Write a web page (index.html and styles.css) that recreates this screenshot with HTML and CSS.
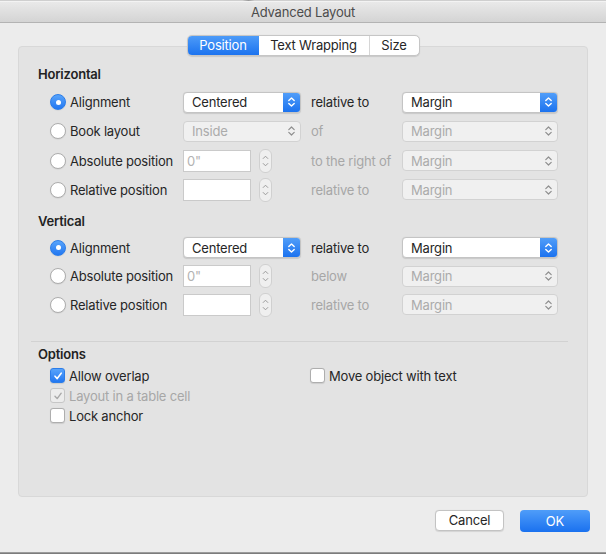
FILE: index.html
```html
<!DOCTYPE html>
<html>
<head>
<meta charset="utf-8">
<link rel="stylesheet" href="styles.css">
</head>
<body>
<div class="screen">
  <div class="behind"></div>
  <div class="window">
    <div class="titlebar">Advanced Layout</div>
    <div class="content">
      <div class="tabs">
        <div class="tab tab-active tab-pos">Position</div>
        <div class="tab tab-wrap">Text Wrapping</div>
        <div class="tab tab-size">Size</div>
      </div>
      <div class="panel">
        <div class="heading">Horizontal</div>
        <div class="rows rows-h">
          <div class="row">
            <div class="c1"><span class="radio radio-on"></span><span class="lbl">Alignment</span></div>
            <div class="c2"><div class="popup"><span class="pv">Centered</span><span class="pbtn"><svg width="9" height="12" viewBox="0 0 9 12"><path d="M1.8 4.6 L4.5 2 L7.2 4.6 M1.8 7.4 L4.5 10 L7.2 7.4" fill="none" stroke="#fff" stroke-width="1.4" stroke-linecap="round" stroke-linejoin="round"/></svg></span></div></div>
            <div class="c3 lbl">relative to</div>
            <div class="c4"><div class="popup popup-wide"><span class="pv">Margin</span><span class="pbtn"><svg width="9" height="12" viewBox="0 0 9 12"><path d="M1.8 4.6 L4.5 2 L7.2 4.6 M1.8 7.4 L4.5 10 L7.2 7.4" fill="none" stroke="#fff" stroke-width="1.4" stroke-linecap="round" stroke-linejoin="round"/></svg></span></div></div>
          </div>
          <div class="row">
            <div class="c1"><span class="radio"></span><span class="lbl">Book layout</span></div>
            <div class="c2"><div class="popup popup-off"><span class="pv">Inside</span><span class="pbtn"><svg width="9" height="12" viewBox="0 0 9 12"><path d="M1.8 4.6 L4.5 2 L7.2 4.6 M1.8 7.4 L4.5 10 L7.2 7.4" fill="none" stroke="#8e8e8e" stroke-width="1.2" stroke-linecap="round" stroke-linejoin="round"/></svg></span></div></div>
            <div class="c3 lbl lbl-off">of</div>
            <div class="c4"><div class="popup popup-wide popup-off"><span class="pv">Margin</span><span class="pbtn"><svg width="9" height="12" viewBox="0 0 9 12"><path d="M1.8 4.6 L4.5 2 L7.2 4.6 M1.8 7.4 L4.5 10 L7.2 7.4" fill="none" stroke="#8e8e8e" stroke-width="1.2" stroke-linecap="round" stroke-linejoin="round"/></svg></span></div></div>
          </div>
          <div class="row">
            <div class="c1"><span class="radio"></span><span class="lbl">Absolute position</span></div>
            <div class="c2"><div class="field"><span class="ph">0"</span></div><div class="stepper"><svg width="7" height="18" viewBox="0 0 7 18"><path d="M1.2 6.5 L3.5 4.2 L5.8 6.5 M1.2 11.5 L3.5 13.8 L5.8 11.5" fill="none" stroke="#9a9a9a" stroke-width="1" stroke-linecap="round" stroke-linejoin="round"/></svg></div></div>
            <div class="c3 lbl lbl-off">to the right of</div>
            <div class="c4"><div class="popup popup-wide popup-off"><span class="pv">Margin</span><span class="pbtn"><svg width="9" height="12" viewBox="0 0 9 12"><path d="M1.8 4.6 L4.5 2 L7.2 4.6 M1.8 7.4 L4.5 10 L7.2 7.4" fill="none" stroke="#8e8e8e" stroke-width="1.2" stroke-linecap="round" stroke-linejoin="round"/></svg></span></div></div>
          </div>
          <div class="row">
            <div class="c1"><span class="radio"></span><span class="lbl">Relative position</span></div>
            <div class="c2"><div class="field"></div><div class="stepper"><svg width="7" height="18" viewBox="0 0 7 18"><path d="M1.2 6.5 L3.5 4.2 L5.8 6.5 M1.2 11.5 L3.5 13.8 L5.8 11.5" fill="none" stroke="#9a9a9a" stroke-width="1" stroke-linecap="round" stroke-linejoin="round"/></svg></div></div>
            <div class="c3 lbl lbl-off">relative to</div>
            <div class="c4"><div class="popup popup-wide popup-off"><span class="pv">Margin</span><span class="pbtn"><svg width="9" height="12" viewBox="0 0 9 12"><path d="M1.8 4.6 L4.5 2 L7.2 4.6 M1.8 7.4 L4.5 10 L7.2 7.4" fill="none" stroke="#8e8e8e" stroke-width="1.2" stroke-linecap="round" stroke-linejoin="round"/></svg></span></div></div>
          </div>
        </div>

        <div class="heading heading-v">Vertical</div>
        <div class="rows rows-v">
          <div class="row">
            <div class="c1"><span class="radio radio-on"></span><span class="lbl">Alignment</span></div>
            <div class="c2"><div class="popup"><span class="pv">Centered</span><span class="pbtn"><svg width="9" height="12" viewBox="0 0 9 12"><path d="M1.8 4.6 L4.5 2 L7.2 4.6 M1.8 7.4 L4.5 10 L7.2 7.4" fill="none" stroke="#fff" stroke-width="1.4" stroke-linecap="round" stroke-linejoin="round"/></svg></span></div></div>
            <div class="c3 lbl">relative to</div>
            <div class="c4"><div class="popup popup-wide"><span class="pv">Margin</span><span class="pbtn"><svg width="9" height="12" viewBox="0 0 9 12"><path d="M1.8 4.6 L4.5 2 L7.2 4.6 M1.8 7.4 L4.5 10 L7.2 7.4" fill="none" stroke="#fff" stroke-width="1.4" stroke-linecap="round" stroke-linejoin="round"/></svg></span></div></div>
          </div>
          <div class="row">
            <div class="c1"><span class="radio"></span><span class="lbl">Absolute position</span></div>
            <div class="c2"><div class="field"><span class="ph">0"</span></div><div class="stepper"><svg width="7" height="18" viewBox="0 0 7 18"><path d="M1.2 6.5 L3.5 4.2 L5.8 6.5 M1.2 11.5 L3.5 13.8 L5.8 11.5" fill="none" stroke="#9a9a9a" stroke-width="1" stroke-linecap="round" stroke-linejoin="round"/></svg></div></div>
            <div class="c3 lbl lbl-off">below</div>
            <div class="c4"><div class="popup popup-wide popup-off"><span class="pv">Margin</span><span class="pbtn"><svg width="9" height="12" viewBox="0 0 9 12"><path d="M1.8 4.6 L4.5 2 L7.2 4.6 M1.8 7.4 L4.5 10 L7.2 7.4" fill="none" stroke="#8e8e8e" stroke-width="1.2" stroke-linecap="round" stroke-linejoin="round"/></svg></span></div></div>
          </div>
          <div class="row">
            <div class="c1"><span class="radio"></span><span class="lbl">Relative position</span></div>
            <div class="c2"><div class="field"></div><div class="stepper"><svg width="7" height="18" viewBox="0 0 7 18"><path d="M1.2 6.5 L3.5 4.2 L5.8 6.5 M1.2 11.5 L3.5 13.8 L5.8 11.5" fill="none" stroke="#9a9a9a" stroke-width="1" stroke-linecap="round" stroke-linejoin="round"/></svg></div></div>
            <div class="c3 lbl lbl-off">relative to</div>
            <div class="c4"><div class="popup popup-wide popup-off"><span class="pv">Margin</span><span class="pbtn"><svg width="9" height="12" viewBox="0 0 9 12"><path d="M1.8 4.6 L4.5 2 L7.2 4.6 M1.8 7.4 L4.5 10 L7.2 7.4" fill="none" stroke="#8e8e8e" stroke-width="1.2" stroke-linecap="round" stroke-linejoin="round"/></svg></span></div></div>
          </div>
        </div>

        <div class="sep"></div>
        <div class="heading heading-o">Options</div>
        <div class="opts">
          <div class="opt"><span class="cb cb-on"><svg width="10" height="10" viewBox="0 0 10 10"><path d="M2 5.2 L4.2 7.6 L8.2 2.2" fill="none" stroke="#fff" stroke-width="1.6" stroke-linecap="round" stroke-linejoin="round"/></svg></span><span class="lbl">Allow overlap</span></div>
          <div class="opt"><span class="cb"></span><span class="lbl">Move object with text</span></div>
          <div class="opt"><span class="cb cb-dis"><svg width="10" height="10" viewBox="0 0 10 10"><path d="M2 5.2 L4.2 7.6 L8.2 2.2" fill="none" stroke="#a8a8a8" stroke-width="1.4" stroke-linecap="round" stroke-linejoin="round"/></svg></span><span class="lbl lbl-off">Layout in a table cell</span></div>
          <div class="opt"></div>
          <div class="opt"><span class="cb"></span><span class="lbl">Lock anchor</span></div>
        </div>
      </div>
      <div class="buttons">
        <div class="btn btn-cancel">Cancel</div>
        <div class="btn btn-ok">OK</div>
      </div>
    </div>
  </div>
</div>
</body>
</html>
```

FILE: styles.css
```css
html, body {
  margin: 0;
  padding: 0;
}
body {
  width: 606px;
  height: 554px;
  overflow: hidden;
  background: #7c7c7c;
  font-family: Inter, "Noto Sans", "Liberation Sans", sans-serif;
  font-size: 13px;
  letter-spacing: -0.2px;
  color: #262626;
}
.screen {
  width: 606px;
  height: 554px;
  display: flex;
  flex-direction: column;
}
.behind {
  height: 1px;
  background: linear-gradient(90deg, #cfcfcf 0%, #cfcfcf 40%, #9a9a9a 41%, #cfcfcf 42%, #cfcfcf 100%);
}
.window {
  height: 551px;
  background: #ececec;
  display: flex;
  flex-direction: column;
  border-bottom: 1px solid #9b9b9b;
}
.titlebar {
  height: 20px;
  line-height: 21px;
  text-align: center;
  color: #4c4c4c;
  font-size: 13px;
  background: linear-gradient(#e9e9e9, #d4d4d4);
  border-top: 1px solid #f3f3f3;
  border-bottom: 1px solid #b3b3b3;
}
.content {
  flex: 1;
  padding: 12px 18px 0 18px;
  display: flex;
  flex-direction: column;
}
.tabs {
  align-self: center;
  display: flex;
  height: 19px;
  border: 1px solid #c6c6c6;
  border-radius: 5px;
  background: #fff;
  box-shadow: 0 0.5px 1px rgba(0,0,0,0.12);
  margin-bottom: -10px;
  position: relative;
  z-index: 2;
  overflow: hidden;
}
.tab {
  line-height: 19px;
  text-align: center;
  color: #262626;
  border-left: 1px solid #d6d6d6;
}
.tab-pos { width: 71px; border-left: none; }
.tab-wrap { width: 110px; border-left: none; }
.tab-size { width: 49px; }
.tab-active {
  color: #fff;
  background: linear-gradient(#4d9bf8, #1c73ef);
}
.panel {
  height: 430px;
  background: #e3e3e3;
  border: 1px solid #d8d8d8;
  border-radius: 4px;
  padding: 19px 20px 0 19px;
}
.heading {
  font-weight: 600;
  line-height: 16px;
  height: 16px;
  color: #222;
}
.heading-v { margin-top: 12px; }
.heading-o { margin-top: 4px; }
.rows {
  display: flex;
  flex-direction: column;
  margin-left: 12px;
}
.rows-h { margin-top: 9px; gap: 7.33px; }
.rows-v { margin-top: 8px; gap: 6.5px; }
.row {
  display: flex;
  align-items: center;
  height: 22px;
}
.c1 {
  width: 133px;
  display: flex;
  align-items: center;
  gap: 4px;
}
.c2 {
  width: 128px;
  display: flex;
  align-items: center;
  gap: 8px;
}
.c3 { width: 91px; }
.c4 { width: 156px; }
.lbl { color: #262626; white-space: nowrap; }
.lbl-off { color: #a7a7a7; }
.radio {
  width: 14px;
  height: 14px;
  border-radius: 50%;
  border: 0.5px solid #adadad;
  background: #fff;
  box-shadow: 0 0.5px 1px rgba(0,0,0,0.1);
  display: inline-flex;
  align-items: center;
  justify-content: center;
  flex: none;
}
.radio-on {
  border-color: #2b7de9;
  background: linear-gradient(#58a4fb, #2277f1);
}
.radio-on::after {
  content: "";
  width: 5px;
  height: 5px;
  border-radius: 50%;
  background: #fff;
}
.popup {
  width: 116px;
  height: 19px;
  border: 1px solid #c4c4c4;
  border-radius: 4px;
  background: #fff;
  display: flex;
  align-items: center;
  box-shadow: 0 0.5px 1px rgba(0,0,0,0.12);
  overflow: hidden;
}
.popup-wide { width: 154px; }
.pv {
  flex: 1;
  padding-left: 8px;
  color: #262626;
}
.pbtn {
  width: 17px;
  height: 100%;
  display: flex;
  align-items: center;
  justify-content: center;
  background: linear-gradient(#519ef9, #1b72ef);
}
.popup-off {
  background: #f0f0f0;
  border-color: #d2d2d2;
  box-shadow: none;
}
.popup-off .pv { color: #ababab; }
.popup-off .pbtn { background: none; }
.field {
  width: 66px;
  height: 20px;
  border: 1px solid #cacaca;
  background: #fff;
  display: flex;
  align-items: center;
}
.ph {
  padding-left: 3px;
  color: #b3b3b3;
}
.stepper {
  width: 11px;
  height: 22px;
  border: 1px solid #d0d0d0;
  border-radius: 6px;
  background: #efefef;
  display: flex;
  align-items: center;
  justify-content: center;
}
.sep {
  height: 1px;
  background: #d2d2d2;
  margin: 25px 0 0 -7px;
  width: 537px;
}
.opts {
  margin-top: 4px;
  margin-left: 12px;
  display: grid;
  grid-template-columns: 260px auto;
}
.opt {
  height: 20px;
  display: flex;
  align-items: center;
  gap: 4px;
}
.cb {
  width: 13px;
  height: 13px;
  border: 0.5px solid #aeaeae;
  border-radius: 3px;
  background: #fff;
  box-shadow: 0 0.5px 1px rgba(0,0,0,0.1);
  display: inline-flex;
  align-items: center;
  justify-content: center;
  flex: none;
}
.cb-on {
  border-color: #2b7de9;
  background: linear-gradient(#58a4fb, #2277f1);
}
.cb-dis {
  background: #ececec;
  border-color: #c6c6c6;
  box-shadow: none;
}
.buttons {
  display: flex;
  justify-content: flex-end;
  gap: 16px;
  margin-top: 13px;
  margin-right: -2px;
}
.btn {
  height: 21px;
  line-height: 21px;
  text-align: center;
  border-radius: 4px;
}
.btn-cancel {
  width: 67px;
  border: 1px solid #c3c3c3;
  background: #fff;
  color: #262626;
  box-shadow: 0 0.5px 1px rgba(0,0,0,0.1);
  height: 19px;
  line-height: 19px;
}
.btn-ok {
  width: 70px;
  height: 22px;
  line-height: 22px;
  color: #fff;
  background: linear-gradient(#4f9df9, #1a71ef);
}
```
